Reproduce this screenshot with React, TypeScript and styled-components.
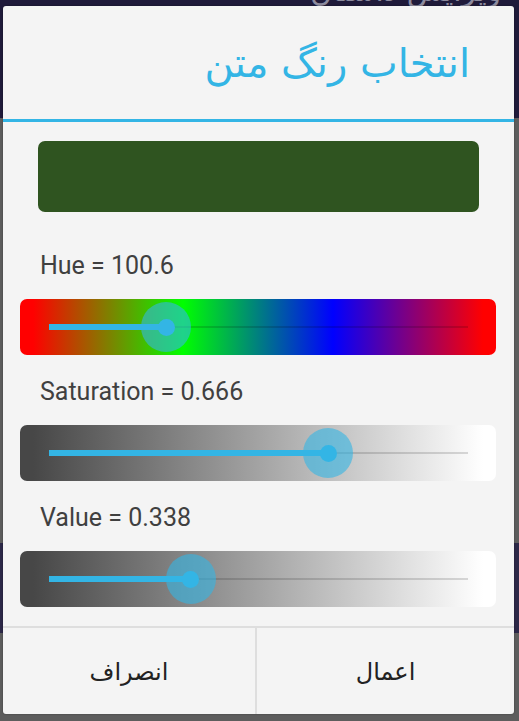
import React from "react";
import styled, { createGlobalStyle } from "styled-components";

const GlobalStyle = createGlobalStyle`
  html, body {
    margin: 0;
    padding: 0;
  }
  body {
    font-family: Roboto, "DejaVu Sans", sans-serif;
    background: #5d5d5d;
  }
`;

const BLUE = "#33b5e5";

const Screen = styled.div`
  position: relative;
  width: 519px;
  height: 721px;
  overflow: hidden;
  display: flex;
  flex-direction: column;
  background: #5d5d5d;
`;

const AppBar = styled.div`
  height: 118px;
  flex-shrink: 0;
  background: #1f1a3a;
  display: flex;
  justify-content: flex-end;
  padding-right: 18px;
`;

const AppTitle = styled.div`
  margin-top: -27px;
  font-family: "DejaVu Sans", sans-serif;
  font-size: 30px;
  color: #8d8b9e;
  direction: rtl;
`;

const Content = styled.div`
  height: 425px;
  flex-shrink: 0;
`;

const Band = styled.div`
  height: 90px;
  flex-shrink: 0;
  background: #2c2848;
`;

const Dialog = styled.div`
  position: absolute;
  top: 6px;
  left: 3px;
  width: 511px;
  height: 708px;
  border-radius: 3px;
  background: #f4f4f4;
  display: flex;
  flex-direction: column;
  overflow: hidden;
  box-shadow: 0 0 2px rgba(0, 0, 0, 0.4);
`;

const TitleBar = styled.div`
  height: 113px;
  border-bottom: 3px solid ${BLUE};
  display: flex;
  align-items: center;
  direction: rtl;
  padding-right: 44px;
`;

const Title = styled.h1`
  margin: 0;
  font-family: "DejaVu Sans", sans-serif;
  font-weight: normal;
  font-size: 40px;
  color: ${BLUE};
`;

const Body = styled.div`
  padding: 19px 18px 19px 17px;
  display: flex;
  flex-direction: column;
  gap: 23px;
`;

const Swatch = styled.div<{ $color: string }>`
  height: 71px;
  margin: 0 17px 17px 18px;
  border-radius: 7px;
  background: ${(p) => p.$color};
`;

const Section = styled.div`
  display: flex;
  flex-direction: column;
  gap: 19px;
`;

const Label = styled.div`
  padding-left: 20px;
  font-size: 25px;
  line-height: 28px;
  color: #404040;
`;

const SliderBox = styled.div<{ $bg: string }>`
  height: 56px;
  border-radius: 7px;
  background: ${(p) => p.$bg};
  display: flex;
  align-items: center;
  padding: 0 28px 0 29px;
`;

const Track = styled.div`
  position: relative;
  flex: 1;
  height: 2px;
  background: rgba(0, 0, 0, 0.14);
`;

const Fill = styled.div`
  position: absolute;
  left: 0;
  top: 50%;
  height: 6px;
  transform: translateY(-50%);
  background: ${BLUE};
`;

const Thumb = styled.div`
  position: absolute;
  top: 50%;
  width: 50px;
  height: 50px;
  border-radius: 50%;
  transform: translate(-50%, -50%);
  background: rgba(51, 181, 229, 0.6);
  display: flex;
  align-items: center;
  justify-content: center;

  &::after {
    content: "";
    width: 17px;
    height: 17px;
    border-radius: 50%;
    background: ${BLUE};
  }
`;

const Footer = styled.div`
  flex: 1;
  border-top: 2px solid #dedede;
  display: grid;
  grid-template-columns: 254px 1fr;
`;

const Button = styled.button<{ $divider?: boolean }>`
  border: none;
  border-right: ${(p) => (p.$divider ? "2px solid #dedede" : "none")};
  background: transparent;
  font-family: "DejaVu Sans", sans-serif;
  font-size: 24px;
  color: #222;
  padding: 2px 0 0;
  direction: rtl;
`;

const edge = (a: string, b: string) =>
  `linear-gradient(to right, ${a} 13px, ${b} calc(100% - 13px))`;

const hueBg =
  "linear-gradient(to right, #ff0000 13px, #00ff00 163px, #0000ff 313px, #ff0000 463px)";

const Slider: React.FC<{ label: string; value: number; bg: string }> = ({
  label,
  value,
  bg,
}) => {
  const pct = `${value * 100}%`;
  return (
    <Section>
      <Label>{label}</Label>
      <SliderBox $bg={bg}>
        <Track>
          <Fill style={{ width: pct }} />
          <Thumb style={{ left: pct }} />
        </Track>
      </SliderBox>
    </Section>
  );
};

export default function App() {
  return (
    <>
      <GlobalStyle />
      <Screen>
        <AppBar>
          <AppTitle>ویرایش داستان</AppTitle>
        </AppBar>
        <Content />
        <Band />
        <Dialog>
          <TitleBar>
            <Title>انتخاب رنگ متن</Title>
          </TitleBar>
          <Body>
            <Swatch $color="#2f5420" />
            <Slider label="Hue = 100.6" value={100.6 / 360} bg={hueBg} />
            <Slider
              label="Saturation = 0.666"
              value={0.666}
              bg={edge("#474747", "#ffffff")}
            />
            <Slider
              label="Value = 0.338"
              value={0.338}
              bg={edge("#474747", "#ffffff")}
            />
          </Body>
          <Footer>
            <Button $divider>انصراف</Button>
            <Button>اعمال</Button>
          </Footer>
        </Dialog>
      </Screen>
    </>
  );
}
